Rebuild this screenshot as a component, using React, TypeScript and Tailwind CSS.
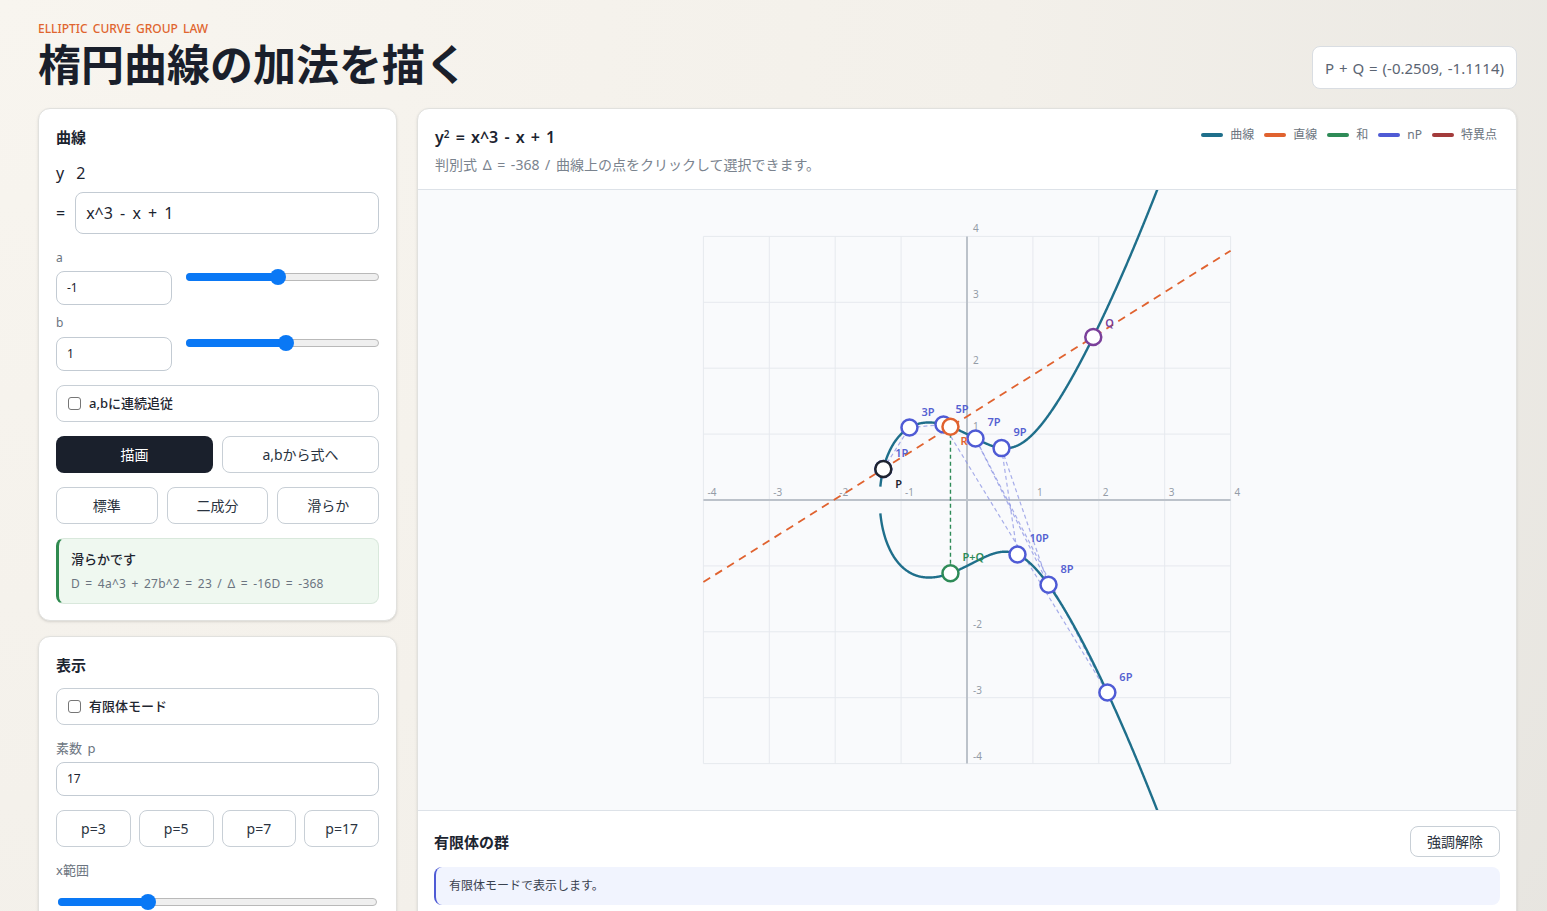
import React from 'react';

const U = 65.9;
const f = (x: number) => x * x * x - x + 1;
const X = (x: number) => x * U;
const Y = (y: number) => -y * U;

const branch = (sign: number) => {
  const pts: string[] = [];
  for (let x = -1.315; x <= 3.05; x += 0.005) {
    const y = sign * Math.sqrt(Math.max(f(x), 0));
    pts.push(`${X(x).toFixed(2)},${Y(y).toFixed(2)}`);
  }
  return 'M' + pts.join(' L');
};

const onCurve = (x: number, s: number) => ({ x, y: s * Math.sqrt(f(x)) });

const P = onCurve(-1.27, 1);
const R = { x: -0.2509, y: 1.1114 };
const PQ = { x: -0.2509, y: -1.1114 };
const m = (R.y - P.y) / (R.x - P.x);
const xQ = m * m - P.x - R.x;
const Q = { x: xQ, y: R.y + m * (xQ - R.x) };

const multiples = [
  { n: 1, ...onCurve(-1.27, 1) },
  { n: 3, ...onCurve(-0.873, 1) },
  { n: 5, ...onCurve(-0.357, 1) },
  { n: 6, ...onCurve(2.13, -1) },
  { n: 7, ...onCurve(0.129, 1) },
  { n: 8, ...onCurve(1.237, -1) },
  { n: 9, ...onCurve(0.524, 1) },
  { n: 10, ...onCurve(0.766, -1) },
];

const ticks = [-4, -3, -2, -1, 0, 1, 2, 3, 4];

const Slider = ({ pct }: { pct: number }) => (
  <div className="relative h-[8px] w-full rounded-full border border-[#b9b9b9] bg-[#efefef]">
    <div className="absolute left-[-1px] top-[-1px] h-[8px] rounded-full bg-[#0a78f5]" style={{ width: `${pct}%` }} />
    <div
      className="absolute top-1/2 h-[16px] w-[16px] -translate-x-1/2 -translate-y-1/2 rounded-full bg-[#0a78f5]"
      style={{ left: `${pct}%` }}
    />
  </div>
);

const Check = ({ label }: { label: string }) => (
  <div className="flex h-[37px] items-center gap-[8px] rounded-lg border border-[#c8cfd6] bg-white pl-[11px]">
    <span className="h-[13px] w-[13px] rounded-[3px] border border-[#767676] bg-white" />
    <span className="text-[13px] font-medium text-[#1f2630]">{label}</span>
  </div>
);

const Btn = ({ children, dark }: { children: React.ReactNode; dark?: boolean }) => (
  <button
    className={
      dark
        ? 'h-[37px] rounded-lg bg-[#1a202c] text-[14px] text-white'
        : 'h-[37px] rounded-lg border border-[#c8cfd6] bg-white text-[14px] text-[#2a3340]'
    }
  >
    {children}
  </button>
);

const legend = [
  { c: 'bg-[#1f6f8b]', t: '曲線' },
  { c: 'bg-[#e0622f]', t: '直線' },
  { c: 'bg-[#2e8b57]', t: '和' },
  { c: 'bg-[#4f5bd5]', t: 'nP' },
  { c: 'bg-[#a33b3b]', t: '特異点' },
];

const Chart = () => {
  const chain = [1, 3, 5, 6, 7, 8, 9, 10].map((n) => multiples.find((p) => p.n === n)!);
  return (
    <svg viewBox="-549 -310 1098 620" className="block h-[620px] w-full" style={{ fontFamily: '"Noto Sans", sans-serif' }}>
      {ticks.map((t) => (
        <g key={t}>
          <line x1={X(t)} y1={Y(-4)} x2={X(t)} y2={Y(4)} stroke="#e6e9ee" strokeWidth={1} />
          <line x1={X(-4)} y1={Y(t)} x2={X(4)} y2={Y(t)} stroke="#e6e9ee" strokeWidth={1} />
        </g>
      ))}
      <line x1={X(-4)} y1={0} x2={X(4)} y2={0} stroke="#bcc2ca" strokeWidth={2} />
      <line x1={0} y1={Y(-4)} x2={0} y2={Y(4)} stroke="#bcc2ca" strokeWidth={2} />
      {ticks
        .filter((t) => t !== 0)
        .map((t) => (
          <g key={'l' + t} fontSize={10} fill="#949ca7">
            <text x={X(t) + 4} y={-4}>{t}</text>
            {t !== -1 && <text x={6} y={Y(t) - 4}>{t}</text>}
          </g>
        ))}
      <line
        x1={X(-4)}
        y1={Y(R.y + m * (-4 - R.x))}
        x2={X(4)}
        y2={Y(R.y + m * (4 - R.x))}
        stroke="#e0622f"
        strokeWidth={1.8}
        strokeDasharray="8 6"
      />
      <line x1={X(R.x)} y1={Y(R.y)} x2={X(PQ.x)} y2={Y(PQ.y)} stroke="#2e8b57" strokeWidth={1.4} strokeDasharray="4 3" />
      {chain.slice(0, -1).map((a, i) => {
        const b = chain[i + 1];
        return (
          <line
            key={'c' + i}
            x1={X(a.x)}
            y1={Y(a.y)}
            x2={X(b.x)}
            y2={Y(b.y)}
            stroke="#8b93e3"
            strokeOpacity={0.75}
            strokeWidth={1.2}
            strokeDasharray="4 3"
          />
        );
      })}
      <path d={branch(1)} fill="none" stroke="#1f6f8b" strokeWidth={2.4} />
      <path d={branch(-1)} fill="none" stroke="#1f6f8b" strokeWidth={2.4} />
      {multiples.map((p) => (
        <g key={'m' + p.n}>
          <circle cx={X(p.x)} cy={Y(p.y)} r={8} fill="#fff" stroke="#4f5bd5" strokeWidth={2.5} />
          <text x={X(p.x) + 12} y={Y(p.y) - 12} fontSize={11} fontWeight={600} fill="#5561d1">
            {p.n}P
          </text>
        </g>
      ))}
      <circle cx={X(R.x)} cy={Y(R.y)} r={8} fill="#fff" stroke="#e0622f" strokeWidth={2.5} />
      <text x={X(R.x) + 10} y={Y(R.y) + 18} fontSize={11} fontWeight={600} fill="#e0622f">R</text>
      <circle cx={X(P.x)} cy={Y(P.y)} r={8} fill="#fff" stroke="#1f2430" strokeWidth={2.5} />
      <text x={X(P.x) + 12} y={Y(P.y) + 19} fontSize={11} fontWeight={600} fill="#1f2430">P</text>
      <circle cx={X(Q.x)} cy={Y(Q.y)} r={8} fill="#fff" stroke="#7a3f9a" strokeWidth={2.5} />
      <text x={X(Q.x) + 12} y={Y(Q.y) - 10} fontSize={11} fontWeight={600} fill="#7a3f9a">Q</text>
      <circle cx={X(PQ.x)} cy={Y(PQ.y)} r={8} fill="#fff" stroke="#2e8b57" strokeWidth={2.5} />
      <text x={X(PQ.x) + 12} y={Y(PQ.y) - 12} fontSize={11} fontWeight={600} fill="#2e8b57">P+Q</text>
    </svg>
  );
};

export default function App() {
  return (
    <div
      className="min-h-screen bg-[radial-gradient(circle_at_top_left,#f8f5ef_0%,#f3f0ea_55%,#e7e5e0_100%)] pl-[38px] pr-[30px] pt-[20px] text-[#1c2430] [word-spacing:2px]"
      style={{ fontFamily: '"Noto Sans", "Noto Sans CJK JP", sans-serif' }}
    >
      {/* header */}
      <header className="flex items-end justify-between">
        <div>
          <p className="text-[12px] font-medium uppercase text-[#e0652f]">Elliptic Curve Group Law</p>
          <h1 className="mt-[2px] text-[43px] font-bold leading-[1.15] text-[#1a1f2b]">楕円曲線の加法を描く</h1>
        </div>
        <div className="flex h-[43px] items-center rounded-lg border border-[#d9dde2] bg-white px-[12px] text-[15px] text-[#5b6573] [word-spacing:1px]">
          P + Q = (-0.2509, -1.1114)
        </div>
      </header>

      <div className="mt-[19px] grid grid-cols-[359px_1fr] gap-[20px]">
        {/* left column */}
        <div className="flex flex-col gap-[15px]">
          <section className="rounded-xl border border-[#e1e1de] bg-white px-[17px] pb-[16px] pt-[17px] shadow-sm">
            <h2 className="text-[15px] font-bold leading-[22px]">曲線</h2>
            <div className="mt-[14px] flex gap-[12px] text-[16px] leading-[22px]">
              <span>y</span>
              <span>2</span>
            </div>
            <div className="mt-[8px] flex items-center gap-[10px]">
              <span className="text-[16px]">=</span>
              <div className="flex h-[42px] flex-1 items-center rounded-lg border border-[#c3cbd3] px-[10px] text-[16px] [word-spacing:3px]">
                x^3 - x + 1
              </div>
            </div>

            <p className="mt-[16px] text-[12px] leading-[16px] text-[#6b7480]">a</p>
            <div className="mt-[5px] flex items-start gap-[14px]">
              <div className="flex h-[34px] w-[116px] items-center rounded-lg border border-[#c3cbd3] px-[10px] text-[12px]">-1</div>
              <div className="flex-1 pt-[2px]">
                <Slider pct={47.5} />
              </div>
            </div>

            <p className="mt-[10px] text-[12px] leading-[16px] text-[#6b7480]">b</p>
            <div className="mt-[6px] flex items-start gap-[14px]">
              <div className="flex h-[34px] w-[116px] items-center rounded-lg border border-[#c3cbd3] px-[10px] text-[12px]">1</div>
              <div className="flex-1 pt-[2px]">
                <Slider pct={52} />
              </div>
            </div>

            <div className="mt-[14px]">
              <Check label="a,bに連続追従" />
            </div>
            <div className="mt-[14px] grid grid-cols-2 gap-[9px]">
              <Btn dark>描画</Btn>
              <Btn>a,bから式へ</Btn>
            </div>
            <div className="mt-[14px] grid grid-cols-3 gap-[9px]">
              <Btn>標準</Btn>
              <Btn>二成分</Btn>
              <Btn>滑らか</Btn>
            </div>
            <div className="mt-[14px] rounded-lg border border-l-[3px] border-[#d9e8dc] border-l-[#2f8a4f] bg-[#eff8f0] px-[12px] py-[11px]">
              <p className="text-[13px] font-medium leading-[18px] text-[#1f2630]">滑らかです</p>
              <p className="mt-[8px] text-[12px] leading-[16px] tracking-[0.02em] text-[#6b7480]">D = 4a^3 + 27b^2 = 23 / Δ = -16D = -368</p>
            </div>
          </section>

          <section className="rounded-xl border border-[#e1e1de] bg-white p-[17px] shadow-sm">
            <h2 className="text-[15px] font-bold leading-[22px]">表示</h2>
            <div className="mt-[12px]">
              <Check label="有限体モード" />
            </div>
            <p className="mt-[14px] text-[13px] leading-[18px] text-[#6b7480]">素数 p</p>
            <div className="mt-[5px] flex h-[34px] items-center rounded-lg border border-[#c3cbd3] px-[10px] text-[12px]">17</div>
            <div className="mt-[14px] grid grid-cols-4 gap-[8px]">
              <Btn>p=3</Btn>
              <Btn>p=5</Btn>
              <Btn>p=7</Btn>
              <Btn>p=17</Btn>
            </div>
            <p className="mt-[14px] text-[13px] leading-[18px] text-[#6b7480]">x範囲</p>
            <div className="mt-[19px] px-[2px]">
              <Slider pct={28} />
            </div>
            <div className="h-[40px]" />
          </section>
        </div>

        {/* right panel */}
        <section className="overflow-hidden rounded-xl border border-[#e1e1de] bg-white shadow-sm">
          <div className="flex items-start justify-between border-b border-[#dde2e8] pb-[14px] pl-[17px] pr-[19px] pt-[17px]">
            <div>
              <p className="text-[16px] font-semibold leading-[22px]">
                y<sup className="text-[10px]">2</sup> = x^3 - x + 1
              </p>
              <p className="mt-[7px] text-[14px] leading-[20px] text-[#7a838e]">判別式 Δ = -368 / 曲線上の点をクリックして選択できます。</p>
            </div>
            <div className="flex items-center gap-[10px] pt-[1px] [word-spacing:0px]">
              {legend.map((l) => (
                <div key={l.t} className="flex items-center gap-[7px]">
                  <span className={`h-[4px] w-[22px] rounded-full ${l.c}`} />
                  <span className="text-[12px] leading-[16px] text-[#6b7480]">{l.t}</span>
                </div>
              ))}
            </div>
          </div>

          <div className="border-b border-[#dde2e8] bg-[#f9fafc]">
            <Chart />
          </div>

          <div className="px-[16px] pb-[20px] pt-[15px]">
            <div className="flex items-center justify-between">
              <h3 className="text-[15px] font-bold">有限体の群</h3>
              <button className="h-[31px] w-[90px] rounded-lg border border-[#c8cfd6] bg-white text-[14px] text-[#2a3340]">強調解除</button>
            </div>
            <div className="mt-[10px] flex h-[38px] items-center rounded-lg border-l-2 border-[#4f5bd5] bg-[#f1f4fe] px-[13px] text-[12px] text-[#3a4250]">
              有限体モードで表示します。
            </div>
          </div>
        </section>
      </div>
    </div>
  );
}
